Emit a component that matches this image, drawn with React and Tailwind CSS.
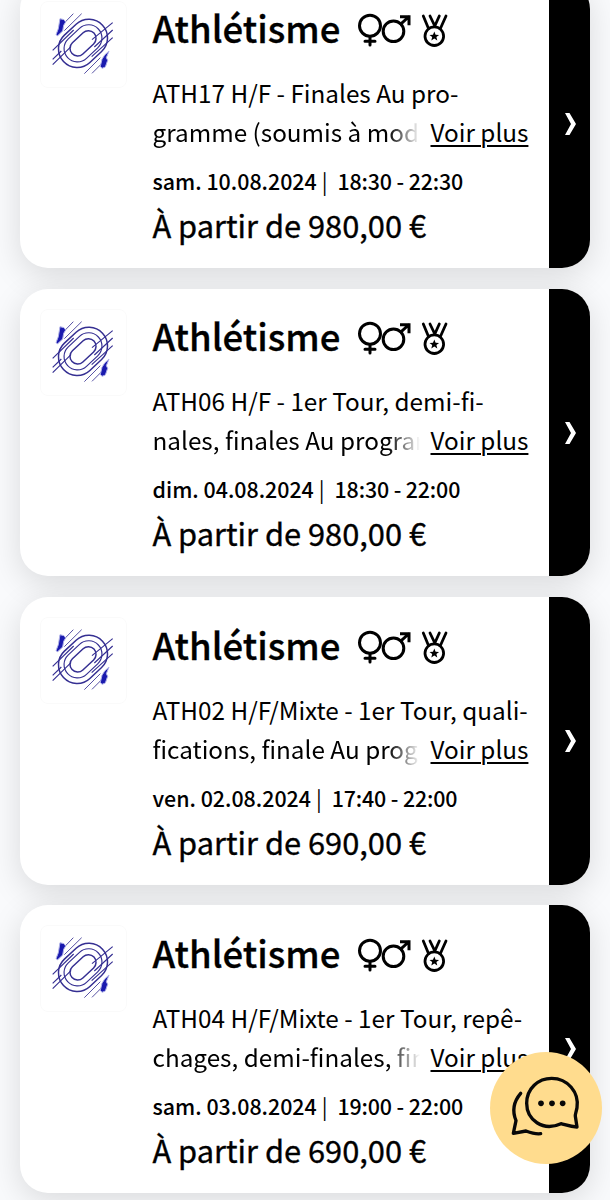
import React from "react";

const sessions = [
  {
    lines: ["ATH17 H/F - Finales Au pro-", "gramme (soumis à mod"],
    date: "sam. 10.08.2024",
    time: "18:30 - 22:30",
    price: "980,00",
  },
  {
    lines: ["ATH06 H/F - 1er Tour, demi-fi-", "nales, finales Au progran"],
    date: "dim. 04.08.2024",
    time: "18:30 - 22:00",
    price: "980,00",
  },
  {
    lines: ["ATH02 H/F/Mixte - 1er Tour, quali-", "fications, finale Au prog"],
    date: "ven. 02.08.2024",
    time: "17:40 - 22:00",
    price: "690,00",
  },
  {
    lines: ["ATH04 H/F/Mixte - 1er Tour, repê-", "chages, demi-finales, fin"],
    date: "sam. 03.08.2024",
    time: "19:00 - 22:00",
    price: "690,00",
  },
];

function AthleticsLogo() {
  return (
    <svg viewBox="0 0 255 255" className="block size-[85px]" fill="none" stroke="#352f92" strokeWidth="4.5">
      <g transform="translate(-34 -29)">
        <g transform="rotate(-43 160 153)">
          <rect x="115" y="130" width="90" height="46" rx="23" />
          <rect x="97" y="113" width="126" height="80" rx="40" strokeWidth="3.5" />
          <rect x="80" y="97" width="160" height="112" rx="56" />
        </g>
        <path d="M69 174 132 113M69 201 95 176M69 217 124 163M187 142 249 91M194 164 249 113M186 193 249 136" strokeWidth="3.5" />
        <path d="M101 95 131 64M104 115 156 64M164 244 212 196M187 243 216 214" strokeWidth="2.5" />
        <path d="m91 79 12 3 5 7-6 10-3 17-15 14-5-3 7-18z" fill="#1a1aae" stroke="#aeb0e8" strokeWidth="3" />
        <path d="m238 176-8 20 4 8-7 20-10 4-5-6 5-21 8-13z" fill="#1a1aae" stroke="#aeb0e8" strokeWidth="3" />
      </g>
    </svg>
  );
}

function EventIcons() {
  return (
    <svg viewBox="355 318 96 40" className="mt-[4px] h-10 w-24" fill="none" stroke="#000" strokeWidth="3" strokeLinecap="round">
      <circle cx="370" cy="333.7" r="10.5" />
      <path d="M370 344.5v8.5M365 349.3h10" />
      <circle cx="393.5" cy="339.3" r="10.3" />
      <path d="m401 331.8 7.5-6.8M401.5 324.7h7.5v7" strokeLinecap="square" />
      <circle cx="434.3" cy="344.2" r="9.3" strokeWidth="2.8" />
      <path d="m423.3 324 5.2 12.5M430 324l4.8 10M439.3 324l-4.5 10M446 324l-5.6 12.5" strokeWidth="2.8" />
      <path d="m434.3 339.5 1.3 3.2 3.5.2-2.7 2.2.9 3.4-3-1.9-3 1.9.9-3.4-2.7-2.2 3.5-.2z" fill="#000" stroke="none" />
    </svg>
  );
}

function SessionCard({ session }) {
  return (
    <article className="flex h-[287.5px] shrink-0 overflow-hidden rounded-[28px] bg-white shadow-[0_8px_32px_rgba(0,0,0,0.13)]">
      <div className="w-[132.5px] shrink-0 pt-[20px] pl-[20px]">
        <div className="size-[87px] rounded-lg border border-[#fafafa]">
          <AthleticsLogo />
        </div>
      </div>
      <div className="flex w-[396.5px] shrink-0 flex-col pt-[23.5px] whitespace-nowrap text-black">
        <div className="flex h-12 items-center">
          <h2 className="w-[202px] text-[36.5px] leading-[48px] font-medium [-webkit-text-stroke:0.3px]">Athlétisme</h2>
          <EventIcons />
        </div>
        <p className="mt-[21px] text-[24.3px] leading-[39px]">{session.lines[0]}</p>
        <div className="flex text-[24.3px] leading-[39px]">
          <p className="w-[267px] overflow-hidden mask-r-from-[calc(100%-32px)] mask-r-to-100%">{session.lines[1]}</p>
          <a className="ml-[11px] underline decoration-2 underline-offset-[3px]">Voir plus</a>
        </div>
        <p className="mt-[14px] flex text-[21.4px] leading-[32px]">
          <span className="font-medium">{session.date}</span>
          <span className="mr-[10px] ml-[5px]">|</span>
          <span className="font-medium tracking-[-0.15px]">{session.time}</span>
        </p>
        <p className="mt-[6px] text-[30.8px] leading-[44px] [-webkit-text-stroke:0.35px]">À partir de {session.price} €</p>
      </div>
      <div className="flex flex-1 items-center justify-center bg-black pl-[2px]">
        <svg viewBox="0 0 12 22" className="h-[22px] w-3" fill="#fff">
          <path d="M0 0h4.5L11 11 4.5 22H0L6 11z" />
        </svg>
      </div>
    </article>
  );
}

function ChatButton() {
  return (
    <button className="fixed top-[1051.5px] left-[489.5px] size-[112px] rounded-full bg-[#ffdc8e]">
      <svg viewBox="0 0 336 336" className="size-full" fill="none" stroke="#080808" strokeWidth="10" strokeLinecap="round" strokeLinejoin="round">
        <path d="M213 215C158 240 110 203 110 154c0-45 35-75 75-75 48 0 83 42 76 88-3 16-6 20-5 26l5 32c-20-1-35-7-48-10Z" />
        <path d="M92 124c-23 27-25 55-14 82l-8 38 38-7c16 6 29 10 44 8" />
        <g fill="#080808" stroke="none">
          <circle cx="153" cy="154" r="8.5" />
          <circle cx="186" cy="154" r="8.5" />
          <circle cx="218" cy="154" r="8.5" />
        </g>
      </svg>
    </button>
  );
}

export default function App() {
  return (
    <div className="h-[1200px] overflow-hidden bg-[#f9fafc] font-['Noto_Sans_CJK_SC',sans-serif]">
      <main className="-mt-[19.3px] flex flex-col gap-[20.75px] px-[20px]">
        {sessions.map((session) => (
          <SessionCard key={session.date} session={session} />
        ))}
      </main>
      <ChatButton />
    </div>
  );
}
